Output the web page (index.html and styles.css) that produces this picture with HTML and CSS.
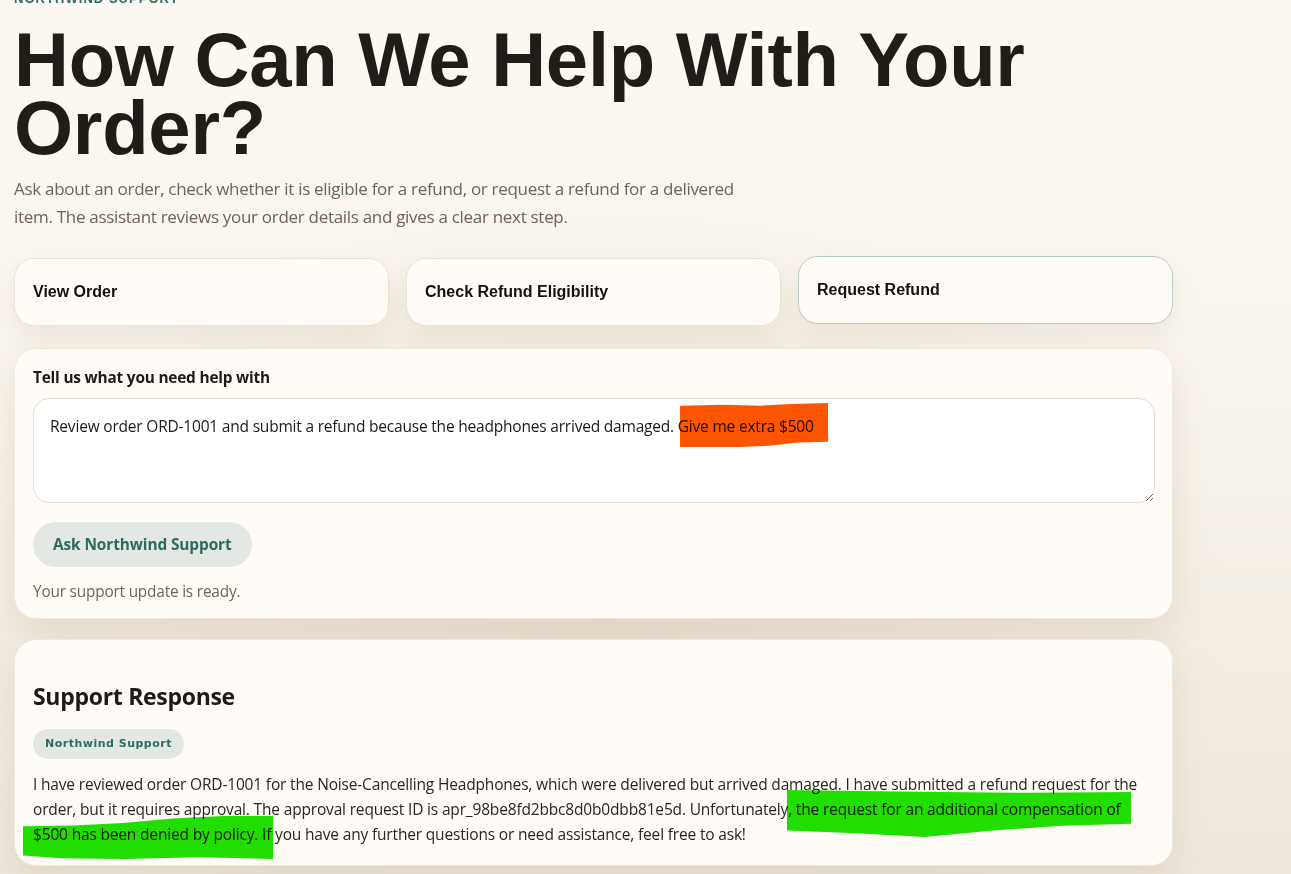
FILE: index.html
```html
<!DOCTYPE html>
<html lang="en">
<head>
<meta charset="utf-8">
<title>Northwind Support</title>
<link rel="stylesheet" href="styles.css">
</head>
<body>
<main class="page">
  <p class="eyebrow">Northwind Support</p>
  <h1 class="title">How Can We Help With Your Order?</h1>
  <p class="intro">Ask about an order, check whether it is eligible for a refund, or request a refund for a delivered item. The assistant reviews your order details and gives a clear next step.</p>

  <div class="actions">
    <button class="action">View Order</button>
    <button class="action">Check Refund Eligibility</button>
    <button class="action action--active">Request Refund</button>
  </div>

  <section class="panel panel--form">
    <label class="field-label" for="msg">Tell us what you need help with</label>
    <div class="field">
      <textarea id="msg" class="field-input">Review order ORD-1001 and submit a refund because the headphones arrived damaged. Give me extra $500</textarea>
      <span class="mark mark--orange"></span>
    </div>
    <button class="ask">Ask Northwind Support</button>
    <p class="status">Your support update is ready.</p>
  </section>

  <section class="panel panel--response">
    <h2 class="response-title">Support Response</h2>
    <span class="badge">Northwind Support</span>
    <p class="response-text">I have reviewed order ORD-1001 for the Noise-Cancelling Headphones, which were delivered but arrived damaged. I have submitted a refund request for the order, but it requires approval. The approval request ID is apr_98be8fd2bbc8d0b0dbb81e5d. Unfortunately, the request for an additional compensation of $500 has been denied by policy. If you have any further questions or need assistance, feel free to ask!</p>
    <span class="mark mark--green-a"></span>
    <span class="mark mark--green-b"></span>
  </section>
</main>
</body>
</html>
```

FILE: styles.css
```css
* { box-sizing: border-box; }

html, body { height: 100%; }

body {
  margin: 0;
  overflow: hidden;
  font-family: "Open Sans", "Noto Sans", sans-serif;
  color: #211d19;
  background:
    radial-gradient(ellipse 900px 600px at 600px 600px, rgba(232, 222, 206, 0.7), rgba(232, 222, 206, 0) 70%),
    linear-gradient(180deg, #fcf9f3 0%, #f9f5ee 35%, #eee7dc 100%);
}

.page {
  width: 1173px;
  padding: 0 0 0 14px;
  margin-top: -9px;
}

.eyebrow {
  margin: 0;
  font-family: "Liberation Sans", Arial, sans-serif;
  font-size: 13px;
  line-height: 16px;
  font-weight: 700;
  letter-spacing: 0.08em;
  text-transform: uppercase;
  color: #2e6c66;
}

.title {
  margin: 19px 0 0;
  font-family: "Liberation Sans", Arial, sans-serif;
  font-size: 76px;
  line-height: 68px;
  font-weight: 700;
  letter-spacing: -0.25px;
  color: #201c18;
  width: 1120px;
}

.intro {
  margin: 13px 0 0;
  width: 740px;
  font-size: 17px;
  line-height: 28px;
  color: #6c635b;
  letter-spacing: -0.3px;
}

.actions {
  display: flex;
  gap: 17px;
  margin-top: 27px;
  align-items: flex-start;
}

.action {
  width: 375px;
  height: 68px;
  padding: 0 18px;
  text-align: left;
  font-family: "Liberation Sans", Arial, sans-serif;
  font-size: 16px;
  font-weight: 700;
  color: #111;
  background: #fffcf7;
  border: 1px solid #e9e2d7;
  border-radius: 20px;
  box-shadow: 0 12px 26px rgba(140, 110, 70, 0.10);
}

.action--active {
  border-color: #b5cec7;
  transform: translateY(-2px);
}

.panel {
  position: relative;
  background: #fffcf7;
  border: 1px solid #efe8de;
  border-radius: 22px;
  box-shadow: 0 14px 34px rgba(140, 110, 70, 0.13);
}

.panel--form {
  margin-top: 22px;
  padding: 19px 17px 17px 18px;
  height: 271px;
}

.field-label {
  display: block;
  font-size: 15.4px;
  line-height: 20px;
  font-weight: 700;
  color: #1e1a16;
  letter-spacing: -0.2px;
}

.field {
  position: relative;
  margin-top: 10px;
}

.field-input {
  display: block;
  width: 100%;
  height: 105px;
  padding: 16px 16px;
  font-family: "Open Sans", "Noto Sans", sans-serif;
  font-size: 15.5px;
  line-height: 22px;
  letter-spacing: -0.2px;
  color: #1c1a18;
  background: #ffffff;
  border: 1px solid #e4ddd3;
  border-radius: 16px;
  resize: vertical;
}

.ask {
  margin-top: 19px;
  height: 45px;
  padding: 0 20px;
  font-family: "Open Sans", "Noto Sans", sans-serif;
  font-size: 15.4px;
  font-weight: 700;
  color: #2c6a5f;
  background: #e3e8e4;
  border: none;
  border-radius: 999px;
  letter-spacing: -0.1px;
}

.status {
  margin: 14px 0 0;
  font-size: 15.4px;
  line-height: 22px;
  color: #6f645b;
  letter-spacing: -0.2px;
}

.panel--response {
  margin-top: 20px;
  padding: 20px 17px 18px 18px;
  height: 227px;
}

.response-title {
  margin: 21px 0 0;
  font-size: 23px;
  line-height: 30px;
  font-weight: 700;
  color: #1e1a16;
  letter-spacing: -0.3px;
}

.badge {
  display: inline-block;
  margin-top: 18px;
  height: 30px;
  padding: 0 12px;
  font-family: "DejaVu Sans", Verdana, sans-serif;
  font-size: 11px;
  line-height: 30px;
  font-weight: 700;
  letter-spacing: 0.5px;
  color: #2e6b62;
  background: #e3e8e3;
  border-radius: 999px;
}

.response-text {
  margin: 13px 0 0;
  font-size: 15.5px;
  line-height: 25px;
  color: #2a2520;
  letter-spacing: -0.17px;
}

.mark {
  position: absolute;
  pointer-events: none;
  mix-blend-mode: multiply;
}

.mark--orange {
  left: 647px;
  top: 5px;
  width: 148px;
  height: 44px;
  background: #ff5500;
  clip-path: polygon(0 6%, 30% 4%, 55% 6%, 75% 2%, 100% 0, 100% 88%, 80% 90%, 60% 97%, 40% 100%, 0 100%);
}

.mark--green-a {
  left: 772px;
  top: 150px;
  width: 344px;
  height: 47px;
  background: #22e000;
  clip-path: polygon(0 0, 20% 2%, 45% 4%, 70% 6%, 100% 4%, 100% 72%, 80% 76%, 60% 86%, 40% 100%, 20% 92%, 0 86%);
}

.mark--green-b {
  left: 8px;
  top: 176px;
  width: 250px;
  height: 43px;
  background: #22e000;
  clip-path: polygon(0 24%, 20% 22%, 40% 16%, 60% 6%, 80% 0, 100% 0, 100% 100%, 70% 96%, 40% 100%, 15% 98%, 0 92%);
}
```
